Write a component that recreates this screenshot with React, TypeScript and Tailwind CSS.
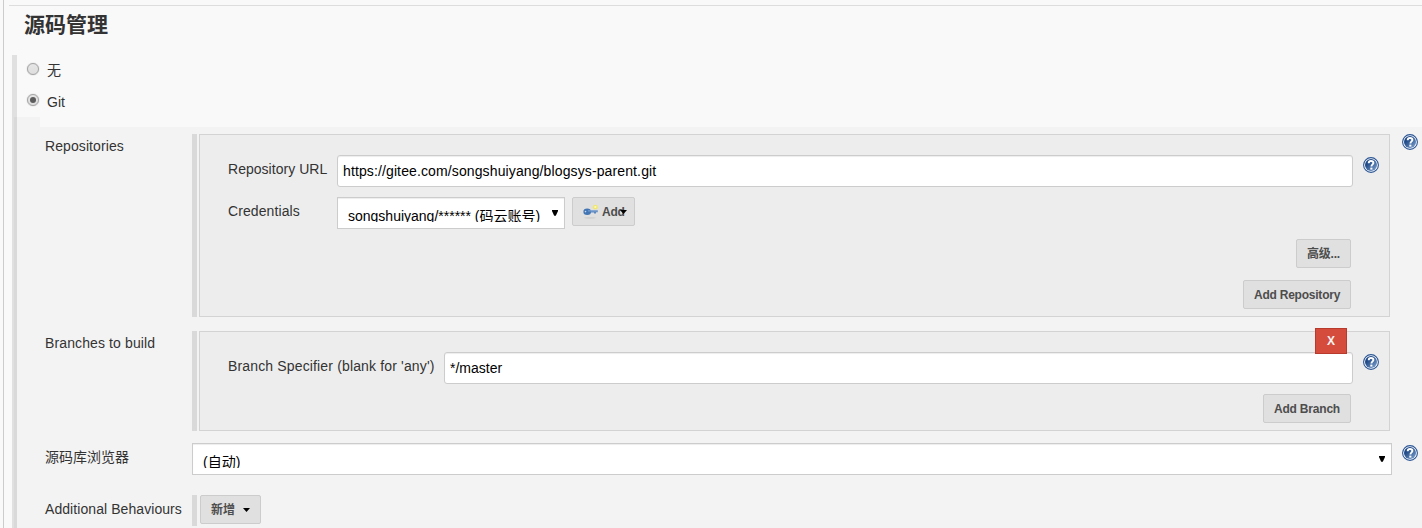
import type { ReactNode } from "react";

function Help() {
  return (
    <svg className="block size-4 shrink-0" viewBox="0 0 16 16">
      <defs>
        <linearGradient id="helpFill" x1="0" y1="0" x2="1" y2="1">
          <stop offset="0.3" stopColor="#204a87" />
          <stop offset="1" stopColor="#84a6d2" />
        </linearGradient>
      </defs>
      <circle cx="8" cy="8" r="7.4" fill="#fff" stroke="#2a5594" strokeWidth="1.1" />
      <circle cx="8" cy="8" r="6" fill="url(#helpFill)" />
      <path d="M5.7 6.2C5.7 4.5 6.7 4 8 4s2.4.6 2.4 1.9C10.4 7.3 8.4 7.5 8.4 9.5" fill="none" stroke="#fff" strokeWidth="1.9" />
      <rect x="7.3" y="10.6" width="2.1" height="2" fill="#fff" />
    </svg>
  );
}

function Radio({ checked }: { checked?: boolean }) {
  return (
    <span className="flex size-3 items-center justify-center rounded-full border border-[#a3a3a3] bg-linear-to-b from-[#e6e6e6] to-[#dedede] shadow-[0_0_1px_#999]">
      {checked && <span className="size-1.5 rounded-full bg-[#5c5c5c]" />}
    </span>
  );
}

function Button({ children, className = "" }: { children: ReactNode; className?: string }) {
  return (
    <button
      className={`flex h-[29px] shrink-0 items-center rounded-[2px] border border-[#cccccc] bg-[#e0e0e0] px-2.5 pt-px text-xs leading-[27px] font-bold whitespace-nowrap text-[#4d4d4d] ${className}`}
    >
      {children}
    </button>
  );
}

function Group({ children, className }: { children: ReactNode; className: string }) {
  return (
    <div className={`flex w-[1198px] gap-0.5 ${className}`}>
      <div className="w-[5px] shrink-0 bg-[#d9d9d9]" />
      <div className="flex-1 border border-[#d3d3d3] bg-[#ededed] pl-7">{children}</div>
    </div>
  );
}

function Field({ value, className }: { value: string; className: string }) {
  return (
    <div
      className={`h-8 rounded-[3px] border border-[#cccccc] bg-white pl-[5px] text-sm leading-[30px] text-black shadow-[inset_0_1px_1px_rgba(0,0,0,0.075)] ${className}`}
    >
      {value}
    </div>
  );
}

function Select({ value, className }: { value: ReactNode; className: string }) {
  return (
    <div className={`flex h-8 justify-between border border-[#cccccc] bg-white pr-1.5 pl-2.5 text-black shadow-[inset_0_1px_1px_rgba(0,0,0,0.075)] ${className}`}>
      <div className="mt-[6px] h-[18px] overflow-hidden text-sm leading-6 whitespace-nowrap">{value}</div>
      <svg className="mt-3 h-1.5 w-1.5" viewBox="0 0 6 6">
        <path d="M0 0h6v1L3.8 5.7H2.2L0 1z" fill="#000" />
      </svg>
    </div>
  );
}

function Key() {
  return (
    <svg className="block size-4 shrink-0" viewBox="0 0 16 16">
      <ellipse cx="7" cy="13.8" rx="6" ry="0.9" fill="#d0d0d0" />
      <path d="M6 6.2h8.7v2h-1.7v1.4h-2V8.6H6z" fill="#5b87bf" />
      <ellipse cx="4.2" cy="7.8" rx="3.8" ry="3.2" fill="#4375b5" />
      <path d="M5 6.9h9" stroke="#8fb3dd" strokeWidth=".8" />
      <circle cx="2.5" cy="7.6" r="0.8" fill="#c8daef" />
      <circle cx="12.3" cy="3.2" r="2.4" fill="#f1e66c" />
      <circle cx="12.3" cy="3" r="1.1" fill="#fffcb0" />
    </svg>
  );
}

export default function App() {
  return (
    <div className="flex h-[528px] w-[1422px] overflow-hidden bg-[#f9f9f9] font-['Liberation_Sans','Noto_Sans_CJK_SC',sans-serif] text-sm text-[#333333]">
      <div className="w-[3px] shrink-0" />
      <main className="flex flex-1 flex-col border-l border-[#cccccc] pt-[5px]">
        <h2 className="ml-[5px] h-[50px] border-t border-[#dddddd] pl-[15px] text-[21px] leading-[38px] font-bold">源码管理</h2>
        <div className="ml-2 flex flex-1">
          <div className="flex w-[5px] shrink-0 flex-col">
            <div className="h-[62px] bg-[#e0e0e0]" />
            <div className="flex-1 border-l-2 border-[#e0e0e0] bg-[#d9d9d9]" />
          </div>
          <div className="flex flex-1 flex-col">
            <div className="flex h-[31px] gap-2 pl-2.5">
              <div className="pt-2"><Radio /></div>
              <span className="leading-[30px]">无</span>
            </div>
            <div className="flex h-[31px] gap-2 pl-2.5">
              <div className="pt-2"><Radio checked /></div>
              <span className="leading-8">Git</span>
            </div>
            <div className="h-2.5 w-[23px] bg-[#f3f3f3]" />
            <div className="flex-1 bg-[#f3f3f3] pt-[7px] pl-7">
              <section className="flex h-[197px]">
                <div className="w-[147px] leading-6 tracking-[0.09px]">Repositories</div>
                <Group className="h-[183px]">
                  <div className="flex h-[42px] pt-5">
                    <span className="w-[109px] leading-7 tracking-[0.03px]">Repository URL</span>
                    <Field value="https://gitee.com/songshuiyang/blogsys-parent.git" className="w-[1016px] shrink-0 tracking-[0.12px]" />
                    <div className="ml-2.5 pt-0.5"><Help /></div>
                  </div>
                  <div className="flex h-[62px] pt-5">
                    <span className="w-[109px] leading-7 tracking-[0.09px]">Credentials</span>
                    <Select value="songshuiyang/****** (码云账号)" className="w-[228px]" />
                    <Button className="ml-[7px] w-[63px]">
                      <Key />
                      <span className="ml-[3px] tracking-[-0.2px]">Add</span>
                      <svg className="-ml-[5px] h-1 w-[7px] shrink-0" viewBox="0 0 7 4"><path d="M0 0h7L3.5 4z" fill="#000" /></svg>
                    </Button>
                  </div>
                  <div className="flex w-[1123px] flex-col items-end gap-3">
                    <Button className="w-[55px] tracking-[-0.2px]">高级...</Button>
                    <Button className="w-[108px] tracking-[-0.23px]">Add Repository</Button>
                  </div>
                </Group>
                <div className="ml-3"><Help /></div>
              </section>
              <section className="flex h-28">
                <div className="w-[147px] leading-6 tracking-[0.12px]">Branches to build</div>
                <Group className="h-[100px]">
                  <div className="relative flex h-[62px] pt-5">
                    <span className="w-[216px] leading-7 tracking-[0.15px] whitespace-nowrap">Branch Specifier (blank for 'any')</span>
                    <Field value="*/master" className="w-[909px] shrink-0" />
                    <div className="ml-2.5 pt-0.5"><Help /></div>
                    <button className="absolute -top-1 left-[1087px] h-[26px] w-8 border border-[#b83a2d] bg-[#d54c3c] text-xs leading-6 font-bold text-[#f3f3f3]">X</button>
                  </div>
                  <div className="flex w-[1123px] justify-end"><Button className="w-[88px] tracking-[-0.2px]">Add Branch</Button></div>
                </Group>
              </section>
              <section className="flex h-[52px]">
                <div className="w-[147px] leading-7">源码库浏览器</div>
                <Select value="(自动)" className="w-[1200px]" />
                <div className="ml-2.5 pt-0.5"><Help /></div>
              </section>
              <section className="flex">
                <div className="w-[147px] leading-7 tracking-[0.07px]">Additional Behaviours</div>
                <div className="flex h-[31px] gap-[3px]">
                  <div className="w-[5px] bg-[#d9d9d9]" />
                  <Button className="w-[61px]">
                    <span>新增</span>
                    <svg className="ml-2 h-1 w-[7px] shrink-0" viewBox="0 0 7 4"><path d="M0 0h7L3.5 4z" fill="#000" /></svg>
                  </Button>
                </div>
              </section>
            </div>
          </div>
        </div>
      </main>
    </div>
  );
}
